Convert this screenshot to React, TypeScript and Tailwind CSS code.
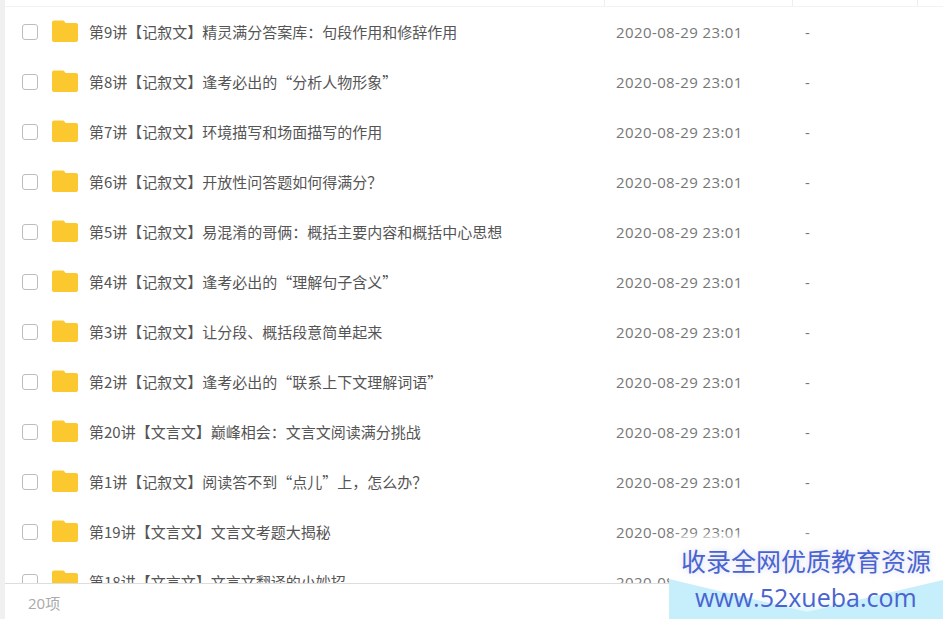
const rows = [
  "第9讲【记叙文】精灵满分答案库：句段作用和修辞作用",
  "第8讲【记叙文】逢考必出的“分析人物形象”",
  "第7讲【记叙文】环境描写和场面描写的作用",
  "第6讲【记叙文】开放性问答题如何得满分？",
  "第5讲【记叙文】易混淆的哥俩：概括主要内容和概括中心思想",
  "第4讲【记叙文】逢考必出的“理解句子含义”",
  "第3讲【记叙文】让分段、概括段意简单起来",
  "第2讲【记叙文】逢考必出的“联系上下文理解词语”",
  "第20讲【文言文】巅峰相会：文言文阅读满分挑战",
  "第1讲【记叙文】阅读答不到“点儿”上，怎么办？",
  "第19讲【文言文】文言文考题大揭秘",
  "第18讲【文言文】文言文翻译的小妙招",
];

function FolderIcon() {
  return (
    <svg width="26" height="22" viewBox="0 0 26 22" className="shrink-0">
      <path
        d="M2 0.5h8.5c1 0 1.6.4 2.2 1.2l.8 1.3H24c1.1 0 2 .9 2 2V20c0 1.1-.9 2-2 2H2c-1.1 0-2-.9-2-2V2.500C0 1.400.9.500 2 .500z"
        fill="#fbc92f"
      />
    </svg>
  );
}

function Row({ name }: { name: string }) {
  return (
    <div className="flex h-[50px] shrink-0 items-center">
      <div className="ml-[17px] h-[16px] w-[16px] shrink-0 rounded-[3px] border border-[#bdbdbd] bg-white" />
      <div className="ml-[14px] mt-[-3px]">
        <FolderIcon />
      </div>
      <div className="ml-[11px] w-[527px] shrink-0 whitespace-nowrap font-['Noto_Sans_CJK_SC',sans-serif] text-[15px] text-[#555]">{name}</div>
      <div className="w-[189px] shrink-0 whitespace-nowrap text-[15px] tracking-[0.4px] text-[#777]">2020-08-29 23:01</div>
      <div className="text-[15px] text-[#777]">-</div>
    </div>
  );
}

export default function App() {
  return (
    <div className="relative flex h-[619px] w-[943px] overflow-hidden bg-white font-['Open_Sans','Noto_Sans_CJK_SC',sans-serif]">
      <div className="w-[5px] shrink-0 bg-[#f0f0f0]" />
      <div className="flex min-w-0 flex-1 flex-col">
        <div className="flex h-[7px] shrink-0 border-b border-[#f2f2f2]">
          <div className="w-[600px] border-r border-[#eeeeee]" />
          <div className="w-[188px] border-r border-[#eeeeee]" />
          <div className="w-[125px] border-r border-[#eeeeee]" />
        </div>
        <div className="flex min-h-0 flex-1 flex-col overflow-hidden">
          {rows.map((name) => (
            <Row key={name} name={name} />
          ))}
        </div>
        <div className="flex h-[36px] shrink-0 items-center border-t border-[#dddddd] bg-white pl-[23px] pt-[4px] text-[15px] text-[#aaaaaa]">
          20项
        </div>
      </div>

      {/* watermark, sits over the list */}
      <div className="absolute bottom-0 right-0 h-[92px] w-[274px]">
        <svg width="274" height="92" viewBox="0 0 274 92" className="absolute inset-0">
          <defs>
            <filter id="wm-blur" x="-10%" y="-40%" width="120%" height="180%">
              <feGaussianBlur stdDeviation="3" />
            </filter>
            <linearGradient id="wm-fade" x1="0" y1="0" x2="0" y2="1">
              <stop offset="0" stopColor="#ffffff" />
              <stop offset="0.55" stopColor="#ffffff" />
              <stop offset="1" stopColor="#dff6fd" />
            </linearGradient>
          </defs>
          <rect x="4" y="10" width="270" height="50" fill="#ffffff" filter="url(#wm-blur)" />
          <path d="M0 52 H274 V92 H0 Z" fill="#c6eefb" />
          <path d="M0 52 L0 50 H274 V53 L138 85 Z" fill="url(#wm-fade)" />
        </svg>
        <div className="absolute left-[12px] top-[17px] whitespace-nowrap text-[25px] leading-[34px] text-[#4a63d0] [text-shadow:0_0_6px_rgba(74,99,208,0.25)]">收录全网优质教育资源</div>
        <div className="absolute left-[26px] top-[53px] whitespace-nowrap text-[25px] leading-[34px] text-[#4a63d0]">www.52xueba.com</div>
      </div>
    </div>
  );
}
